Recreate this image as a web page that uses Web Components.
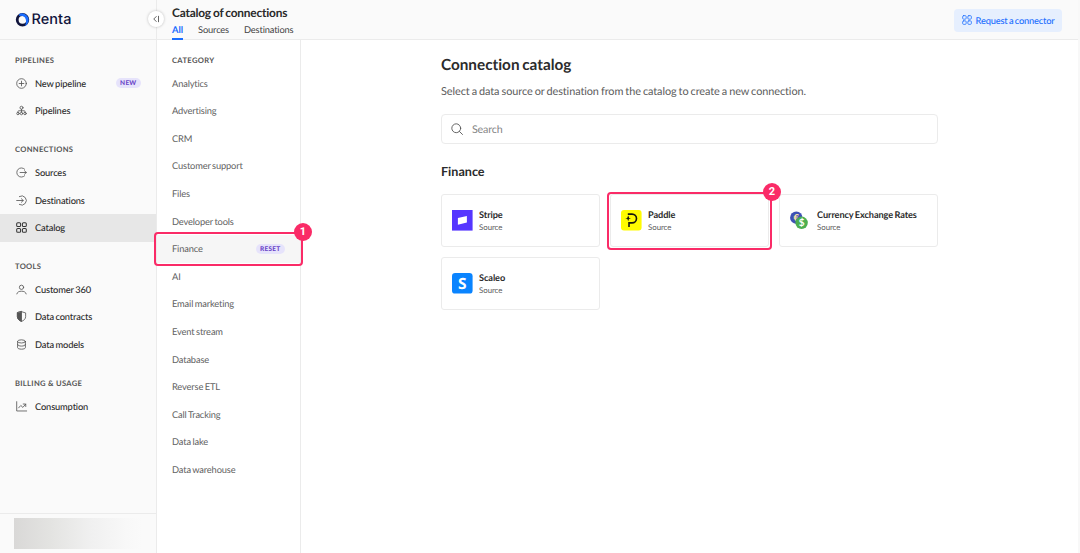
<!DOCTYPE html>
<html lang="en">
<head>
<meta charset="utf-8">
<title>Renta - Catalog of connections</title>
<style>
  html, body { height: 100%; }
  body {
    margin: 0;
    overflow: hidden;
    background: #fff;
    font-family: Lato, "Open Sans", sans-serif;
    font-size: 9.3px;
    font-variant-ligatures: none;
    text-rendering: geometricPrecision;
    letter-spacing: -.15px;
    word-spacing: -.65px;
    color: #2b2b2b;
    --line: #ebebeb;
    --panel: #fafafa;
    --accent: #1a6dff;
    --mark: #fa2b67;
  }
</style>
</head>
<body>
<app-shell>
  <app-sidebar slot="sidebar">
    <nav-section label="Pipelines">
      <nav-item icon="plus" tag="New">New pipeline</nav-item>
      <nav-item icon="tree">Pipelines</nav-item>
    </nav-section>
    <nav-section label="Connections">
      <nav-item icon="source">Sources</nav-item>
      <nav-item icon="destination">Destinations</nav-item>
      <nav-item icon="grid" active>Catalog</nav-item>
    </nav-section>
    <nav-section label="Tools">
      <nav-item icon="user">Customer 360</nav-item>
      <nav-item icon="shield">Data contracts</nav-item>
      <nav-item icon="database">Data models</nav-item>
    </nav-section>
    <nav-section label="Billing &amp; usage">
      <nav-item icon="chart">Consumption</nav-item>
    </nav-section>
  </app-sidebar>

  <page-header slot="header" heading="Catalog of connections">
    <tab-link active>All</tab-link>
    <tab-link>Sources</tab-link>
    <tab-link>Destinations</tab-link>
  </page-header>

  <category-list slot="categories" label="Category">
    <category-item>Analytics</category-item>
    <category-item>Advertising</category-item>
    <category-item>CRM</category-item>
    <category-item>Customer support</category-item>
    <category-item>Files</category-item>
    <category-item>Developer tools</category-item>
    <category-item active tag="Reset">Finance<step-mark slot="mark" step="1"></step-mark></category-item>
    <category-item>AI</category-item>
    <category-item>Email marketing</category-item>
    <category-item>Event stream</category-item>
    <category-item>Database</category-item>
    <category-item>Reverse ETL</category-item>
    <category-item>Call Tracking</category-item>
    <category-item>Data lake</category-item>
    <category-item>Data warehouse</category-item>
  </category-list>

  <catalog-view heading="Connection catalog" group="Finance">
    <span slot="intro">Select a data source or destination from the catalog to create a new connection.</span>
    <connector-card name="Stripe" logo="stripe"></connector-card>
    <connector-card name="Paddle" logo="paddle"><step-mark step="2"></step-mark></connector-card>
    <connector-card name="Currency Exchange Rates" logo="currency"></connector-card>
    <connector-card name="Scaleo" logo="scaleo"></connector-card>
  </catalog-view>
</app-shell>

<script>
// outline icons, 16x16 grid
const ICONS = {
  plus: '<circle cx="8" cy="8" r="7"/><path d="M8 4.6v6.8M4.6 8h6.8"/>',
  tree: '<circle cx="8" cy="4" r="2.2"/><circle cx="2.9" cy="12.4" r="1.8"/><circle cx="8" cy="12.4" r="1.8"/><circle cx="13.1" cy="12.4" r="1.8"/><path d="M8 6.2v4.4M2.9 10.6V9.4Q2.9 8.4 3.9 8.4H12.1Q13.1 8.4 13.1 9.4V10.6"/>',
  source: '<path d="M12.6 3.2A6.7 6.7 0 1 0 12.6 12.8M6 8h9M12.3 5.4L15 8l-2.7 2.6"/>',
  destination: '<path d="M4.9 2.2A6.7 6.7 0 1 1 4.9 13.8M1 8h9.5M7.8 5.4L10.500 8l-2.7 2.6"/>',
  grid: '<rect x="1" y="1" width="5.7" height="5.7" rx="1.7"/><rect x="9.3" y="1" width="5.7" height="5.7" rx="1.7"/><rect x="1" y="9.3" width="5.7" height="5.7" rx="1.7"/><rect x="9.3" y="9.3" width="5.7" height="5.7" rx="1.7"/>',
  user: '<circle cx="8" cy="4.8" r="3.1"/><path d="M1.2 14.4C1.8 11.5 4.6 10.5 8 10.5S14.2 11.5 14.8 14.4"/>',
  shield: '<path d="M8 1L14 2.8V8.2C14 11.6 11.4 13.8 8 15.2C4.6 13.8 2 11.6 2 8.2V2.8Z"/><path d="M8 1V15.2C4.6 13.8 2 11.6 2 8.2V2.8Z" fill="currentColor"/>',
  database: '<ellipse cx="8" cy="3.5" rx="5.7" ry="2.3"/><path d="M2.3 3.5V12.5C2.3 13.8 4.8 14.8 8 14.8S13.7 13.8 13.7 12.5V3.5M2.3 8C2.3 9.3 4.8 10.3 8 10.3S13.7 9.3 13.7 8"/>',
  chart: '<path d="M1 1V14.5H15.5M3.8 10L7 6.5L10 9.3L14 4.6M10.5 4.4H14.2V8"/>',
  search: '<circle cx="7" cy="7" r="5.9"/><path d="M11.3 11.3L15.3 15.3"/>',
  collapse: '<path d="M8.5 3L3.5 8L8.5 13M13 2.5V13.5"/>'
};

const LOGOS = {
  stripe: '<rect width="20.6" height="20.6" fill="#5636ff"/><path d="M5.9 8.1L14.9 6V12.6L5.9 14.7Z" fill="#fff"/>',
  paddle: '<rect width="20.6" height="20.6" rx="3" fill="#fffb00"/><path d="M6.8 4.1H11.1A4.4 4.4 0 0 1 11.1 12.9H8V17" fill="none" stroke="#17170e" stroke-width="1.6"/><path d="M7.2 5.4Q7.4 8 10 8.3Q7.4 8.6 7.2 11.2Q7 8.6 4.3 8.3Q7 8 7.2 5.4Z" fill="#17170e"/>',
  currency: '<circle cx="6.3" cy="7.7" r="6.2" fill="#3f51b5"/><text x="6.2" y="11" text-anchor="middle" font-size="9.5" font-weight="700" fill="#ffe9a6">€</text><circle cx="11.6" cy="12.8" r="6.2" fill="#4caf50"/><text x="11.6" y="16.3" text-anchor="middle" font-size="10" font-weight="700" fill="#fff">$</text>',
  scaleo: '<rect width="20.6" height="20.6" rx="3.2" fill="#0a84ff"/><text x="10.3" y="16" text-anchor="middle" font-family="Open Sans" font-size="15.5" font-weight="700" fill="#fff">S</text>'
};

class BaseElement extends HTMLElement {
  connectedCallback() {
    if (this.shadowRoot) return;
    this.attachShadow({ mode: 'open' }).innerHTML = this.render();
  }
  attr(name) {
    return this.getAttribute(name) || '';
  }
}

class AppIcon extends BaseElement {
  render() {
    return `
      <style>
        :host { display: block; width: 11px; height: 11px; flex: none; }
        svg { display: block; width: 100%; height: 100%; overflow: visible; stroke-width: var(--stroke, 1.2); }
      </style>
      <svg viewBox="0 0 16 16" fill="none" stroke="currentColor"
           stroke-linecap="round" stroke-linejoin="round">${ICONS[this.attr('name')]}</svg>
    `;
  }
}

class TagPill extends BaseElement {
  render() {
    return `
      <style>
        :host {
          display: block;
          height: 10px;
          padding: 0 4.5px;
          border-radius: 5px;
          background: #e6e3fb;
          color: #6b46c8;
          font-size: 6.5px;
          font-weight: 900;
          line-height: 11px;
          letter-spacing: .25px;
          text-transform: uppercase;
        }
      </style>
      <slot></slot>
    `;
  }
}

// frame with a numbered badge, laid over the element it stands in
class StepMark extends BaseElement {
  render() {
    return `
      <style>
        :host {
          position: absolute;
          inset: var(--mark-inset, -2px);
          border: 2px solid var(--mark);
          border-radius: 4px;
          z-index: 2;
        }
        span {
          position: absolute;
          top: -11px;
          right: -11px;
          width: 18px;
          height: 18px;
          border-radius: 50%;
          background: var(--mark);
          color: #fff;
          font: 700 11px/18px Roboto, sans-serif;
          letter-spacing: 0;
          text-align: center;
        }
      </style>
      <span>${this.attr('step')}</span>
    `;
  }
}

class AppShell extends BaseElement {
  render() {
    return `
      <style>
        :host {
          display: grid;
          grid-template-columns: 157px 144px 1fr;
          grid-template-rows: 40px 1fr;
          box-sizing: border-box;
          height: 100vh;
          border-right: 2px solid #f8f8f8;
        }
        ::slotted([slot="sidebar"]) { grid-row: 1 / 3; }
        ::slotted([slot="header"]) { grid-column: 2 / 4; }
      </style>
      <slot name="sidebar"></slot>
      <slot name="header"></slot>
      <slot name="categories"></slot>
      <slot></slot>
    `;
  }
}

class AppSidebar extends BaseElement {
  render() {
    return `
      <style>
        :host {
          display: flex;
          flex-direction: column;
          position: relative;
          border-right: 1px solid var(--line);
          background: var(--panel);
        }
        .brand {
          display: flex;
          align-items: center;
          gap: 1.5px;
          box-sizing: border-box;
          height: 40px;
          padding: 0 0 0 15px;
          border-bottom: 1px solid var(--line);
          color: #10143c;
          font: 500 14.5px Inter, sans-serif;
          letter-spacing: .05px;
        }
        .brand svg { width: 15px; height: 15px; }
        nav { flex: 1; padding-top: 13px; }
        .account { padding: 4px 14px 4px; border-top: 1px solid var(--line); }
        .account div {
          height: 31px;
          background: linear-gradient(90deg, #d9d8d7, #e3e3e1 28%, #f0f0f0 60%, #f8f8f8 88%, #fafafa);
        }
        .toggle {
          position: absolute;
          top: 11px;
          right: -8px;
          z-index: 3;
          display: grid;
          place-items: center;
          width: 16px;
          height: 16px;
          border-radius: 50%;
          background: #fff;
          color: #555;
          box-shadow: 0 0 3px rgba(0, 0, 0, .25);
        }
        .toggle app-icon { width: 8px; height: 8px; --stroke: 1.8; }
      </style>
      <div class="brand">
        <svg viewBox="0 0 15 15">
          <circle cx="7.5" cy="7.8" r="5.3" fill="none" stroke="#10143c" stroke-width="2.8"/>
          <path d="M4.2 1.9A6.7 6.7 0 1 1 9.6 14.2Q11.7 11.4 10.8 7.6A4.9 4.9 0 0 0 4.2 4.1Z" fill="#1a6dff"/>
        </svg>
        <span>Renta</span>
      </div>
      <nav><slot></slot></nav>
      <div class="account"><div></div></div>
      <div class="toggle"><app-icon name="collapse"></app-icon></div>
    `;
  }
}

class NavSection extends BaseElement {
  render() {
    return `
      <style>
        :host { display: block; margin-bottom: 17.4px; }
        h4 {
          margin: 0;
          padding: 0 15px 2.6px;
          color: #555;
          font-size: 7.6px;
          font-weight: 700;
          line-height: 14px;
          letter-spacing: .3px;
          word-spacing: 0;
          text-transform: uppercase;
        }
      </style>
      <h4>${this.attr('label').replace('&', '&amp;')}</h4>
      <slot></slot>
    `;
  }
}

class NavItem extends BaseElement {
  render() {
    const tag = this.attr('tag');
    return `
      <style>
        :host {
          display: flex;
          align-items: center;
          gap: 8px;
          height: 27.6px;
          padding: 0 15px 0 16px;
          font-weight: 500;
        }
        :host([active]) { background: #e7e7e7; }
        app-icon { color: #555; }
        :host([active]) app-icon { color: #333; --stroke: 1.5; }
        .text { flex: 1; }
      </style>
      <app-icon name="${this.attr('icon')}"></app-icon>
      <span class="text"><slot></slot></span>
      ${tag && `<tag-pill>${tag}</tag-pill>`}
    `;
  }
}

class PageHeader extends BaseElement {
  render() {
    return `
      <style>
        :host {
          display: flex;
          justify-content: space-between;
          border-bottom: 1px solid var(--line);
          background: var(--panel);
        }
        .left {
          display: flex;
          flex-direction: column;
          justify-content: space-between;
          padding: 5px 0 0 15px;
        }
        h1 { margin: 0; font-size: 11.9px; line-height: 16px; letter-spacing: -.2px; }
        .tabs { display: flex; gap: 15px; margin-bottom: -1px; }
        button {
          display: flex;
          align-items: center;
          gap: 4px;
          align-self: flex-start;
          height: 23px;
          margin: 8.5px 16px 0 0;
          padding: 0 7.5px;
          border: 0;
          border-radius: 4px;
          background: #e6effe;
          color: var(--accent);
          font: 500 9.3px Lato, sans-serif;
          text-rendering: inherit;
          letter-spacing: -.2px;
          word-spacing: -.65px;
        }
        button app-icon { width: 10px; height: 10px; }
      </style>
      <div class="left">
        <h1>${this.attr('heading')}</h1>
        <div class="tabs"><slot></slot></div>
      </div>
      <button><app-icon name="grid"></app-icon>Request a connector</button>
    `;
  }
}

class TabLink extends BaseElement {
  render() {
    return `
      <style>
        :host { display: block; height: 14px; line-height: 12px; color: #444; border-bottom: 2px solid transparent; }
        :host([active]) { color: var(--accent); font-weight: 700; letter-spacing: 0; border-bottom-color: var(--accent); }
      </style>
      <slot></slot>
    `;
  }
}

class CategoryList extends BaseElement {
  render() {
    return `
      <style>
        :host { display: block; padding-top: 12.8px; border-right: 1px solid var(--line); }
        h4 {
          margin: 0;
          padding: 0 15px 2.6px;
          color: #555;
          font-size: 7.6px;
          line-height: 14px;
          letter-spacing: .35px;
          text-transform: uppercase;
        }
      </style>
      <h4>${this.attr('label')}</h4>
      <slot></slot>
    `;
  }
}

class CategoryItem extends BaseElement {
  render() {
    const tag = this.attr('tag');
    return `
      <style>
        :host {
          display: flex;
          align-items: center;
          justify-content: space-between;
          position: relative;
          height: 27.6px;
          padding: 0 15px;
          color: #626262;
          --mark-inset: -2.5px -3px -3px -3px;
        }
        :host([active]) { background: #f6f6f6; }
      </style>
      <span><slot></slot></span>
      ${tag && `<tag-pill>${tag}</tag-pill>`}
      <slot name="mark"></slot>
    `;
  }
}

class CatalogView extends BaseElement {
  render() {
    return `
      <style>
        :host { display: block; box-sizing: border-box; width: 497px; margin: 0 auto; padding-top: 15px; }
        h2 { margin: 0; font-size: 15.3px; line-height: 20px; letter-spacing: 0; word-spacing: -1px; }
        p { margin: 9px 0 0; color: #5c5c5c; font-size: 10.9px; line-height: 16px; letter-spacing: -.08px; }
        .search {
          display: flex;
          align-items: center;
          gap: 9px;
          box-sizing: border-box;
          height: 30px;
          margin-top: 14px;
          padding: 0 9px;
          border: 1px solid var(--line);
          border-radius: 4px;
          color: #858585;
          font-size: 10.7px;
        }
        .search app-icon { width: 12px; height: 12px; color: #555; }
        h3 { margin: 19px 0 14px; font-size: 12.6px; line-height: 17px; letter-spacing: 0; }
        .cards {
          display: grid;
          grid-template-columns: repeat(3, 1fr);
          grid-auto-rows: 53px;
          gap: 10px;
        }
      </style>
      <h2>${this.attr('heading')}</h2>
      <p><slot name="intro"></slot></p>
      <div class="search"><app-icon name="search"></app-icon><span>Search</span></div>
      <h3>${this.attr('group')}</h3>
      <div class="cards"><slot></slot></div>
    `;
  }
}

class ConnectorCard extends BaseElement {
  render() {
    return `
      <style>
        :host {
          display: flex;
          align-items: center;
          gap: 7px;
          position: relative;
          box-sizing: border-box;
          padding-left: 9.5px;
          border: 1px solid var(--line);
          border-radius: 3px;
          --mark-inset: -3px -4px -4px -4px;
        }
        svg { width: 20.6px; height: 20.6px; overflow: visible; }
        .name { padding-top: 1px; font-size: 9.2px; font-weight: 700; line-height: 12px; letter-spacing: -.1px; }
        .kind { color: #5c5c5c; font-size: 7.9px; line-height: 12px; letter-spacing: -.08px; }
      </style>
      <svg viewBox="0 0 20.6 20.6">${LOGOS[this.attr('logo')]}</svg>
      <div>
        <div class="name">${this.attr('name')}</div>
        <div class="kind">Source</div>
      </div>
      <slot></slot>
    `;
  }
}

customElements.define('app-icon', AppIcon);
customElements.define('tag-pill', TagPill);
customElements.define('step-mark', StepMark);
customElements.define('app-shell', AppShell);
customElements.define('app-sidebar', AppSidebar);
customElements.define('nav-section', NavSection);
customElements.define('nav-item', NavItem);
customElements.define('page-header', PageHeader);
customElements.define('tab-link', TabLink);
customElements.define('category-list', CategoryList);
customElements.define('category-item', CategoryItem);
customElements.define('catalog-view', CatalogView);
customElements.define('connector-card', ConnectorCard);
</script>
</body>
</html>
